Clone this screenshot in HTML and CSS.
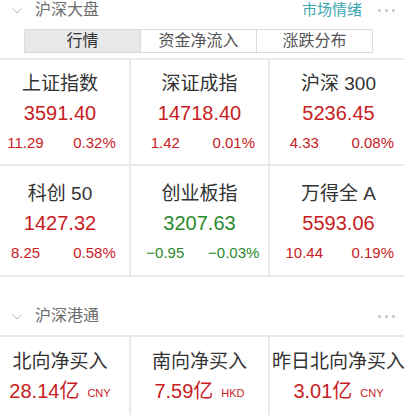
FILE: index.html
```html
<!DOCTYPE html>
<html lang="zh-CN">
<head>
<meta charset="utf-8">
<title>沪深大盘</title>
<link rel="stylesheet" href="styles.css">
</head>
<body>
<div class="page">
  <div class="sec-head">
    <svg class="chev" width="10" height="6" viewBox="0 0 10 6"><polyline points="0.5,0.5 5,5 9.5,0.5" fill="none" stroke="#b8b8b8" stroke-width="1"/></svg>
    <span class="sec-title">沪深大盘</span>
    <span class="spacer"></span>
    <span class="mood">市场情绪</span>
    <span class="dots"><i></i><i></i><i></i></span>
  </div>

  <div class="tabs">
    <div class="tab active">行情</div>
    <div class="tab">资金净流入</div>
    <div class="tab">涨跌分布</div>
  </div>

  <div class="grid grid-main">
    <div class="cell r1">
      <div class="name">上证指数</div>
      <div class="val up">3591.40</div>
      <div class="chg up"><span>11.29</span><span>0.32%</span></div>
    </div>
    <div class="cell r1">
      <div class="name">深证成指</div>
      <div class="val up">14718.40</div>
      <div class="chg up"><span>1.42</span><span>0.01%</span></div>
    </div>
    <div class="cell r1">
      <div class="name">沪深 300</div>
      <div class="val up">5236.45</div>
      <div class="chg up"><span>4.33</span><span>0.08%</span></div>
    </div>
    <div class="cell r2">
      <div class="name">科创 50</div>
      <div class="val up">1427.32</div>
      <div class="chg up"><span>8.25</span><span>0.58%</span></div>
    </div>
    <div class="cell r2">
      <div class="name">创业板指</div>
      <div class="val down">3207.63</div>
      <div class="chg down"><span>−0.95</span><span>−0.03%</span></div>
    </div>
    <div class="cell r2">
      <div class="name">万得全 A</div>
      <div class="val up">5593.06</div>
      <div class="chg up"><span>10.44</span><span>0.19%</span></div>
    </div>
  </div>

  <div class="sec-head sec2">
    <svg class="chev" width="10" height="6" viewBox="0 0 10 6"><polyline points="0.5,0.5 5,5 9.5,0.5" fill="none" stroke="#b8b8b8" stroke-width="1"/></svg>
    <span class="sec-title">沪深港通</span>
    <span class="spacer"></span>
    <span class="dots"><i></i><i></i><i></i></span>
  </div>

  <div class="grid grid-hk">
    <div class="cell r3">
      <div class="name">北向净买入</div>
      <div class="val up">28.14亿<span class="cur">CNY</span></div>
    </div>
    <div class="cell r3">
      <div class="name">南向净买入</div>
      <div class="val up">7.59亿<span class="cur">HKD</span></div>
    </div>
    <div class="cell r3">
      <div class="name">昨日北向净买入</div>
      <div class="val up">3.01亿<span class="cur">CNY</span></div>
    </div>
  </div>
</div>
</body>
</html>
```

FILE: styles.css
```css
* { box-sizing: border-box; }

html, body {
  margin: 0;
  padding: 0;
  background: #ffffff;
}

body {
  width: 404px;
  height: 415px;
  overflow: hidden;
  font-family: "Liberation Sans", "Noto Sans CJK SC", sans-serif;
  color: #333333;
}

.page {
  width: 404px;
}

.sec-head {
  display: flex;
  align-items: center;
  height: 20px;
  padding: 0 9px 0 12px;
}

.sec2 {
  margin-top: 29px;
}

.chev {
  display: block;
  margin-top: 1px;
}

.sec-title {
  margin-left: 13px;
  font-size: 16px;
  line-height: 20px;
  color: #6e6e6e;
}

.spacer { flex: 1; }

.mood {
  font-size: 15px;
  line-height: 20px;
  color: #3ba6b2;
}

.dots {
  display: flex;
  gap: 4px;
  margin-left: 16px;
}

.dots i {
  display: block;
  width: 3px;
  height: 3px;
  border-radius: 50%;
  background: #c6c6c6;
}

.tabs {
  display: flex;
  margin: 9px 0 0 24px;
  width: 349px;
  height: 24px;
  border: 1px solid #dcdcdc;
}

.tab {
  flex: 1;
  text-align: center;
  font-size: 16px;
  line-height: 22px;
  color: #555555;
}

.tab + .tab {
  border-left: 1px solid #dcdcdc;
}

.tab.active {
  background: #e8e8e8;
  color: #333333;
}

.grid {
  display: grid;
  grid-template-columns: 138px 137px 137px;
  column-gap: 2px;
  row-gap: 2px;
  margin-left: -9px;
  width: 416px;
  background: #e9e9e9;
  padding-top: 2px;
}

.grid-main {
  margin-top: 5px;
  grid-template-rows: 104px 109px;
  padding-bottom: 2px;
}

.grid-hk {
  margin-top: 9px;
  grid-template-rows: 78px;
}

.cell {
  background: #ffffff;
  display: flex;
  flex-direction: column;
  align-items: center;
}

.cell.r1 { padding-top: 12px; }
.cell.r2 { padding-top: 16px; }
.cell.r3 { padding-top: 13px; }

.name {
  font-size: 19px;
  line-height: 24px;
  color: #333333;
  white-space: nowrap;
}

.val {
  margin-top: 5px;
  font-size: 20px;
  line-height: 24px;
  white-space: nowrap;
}

.chg {
  display: flex;
  width: 100%;
  margin-top: 9px;
  font-size: 15px;
  line-height: 18px;
}

.chg span {
  flex: 1;
  text-align: center;
}

.up { color: #c8201e; }
.down { color: #2a8a2e; }

.cur {
  margin-left: 8px;
  font-size: 11px;
  vertical-align: 1px;
}
```
